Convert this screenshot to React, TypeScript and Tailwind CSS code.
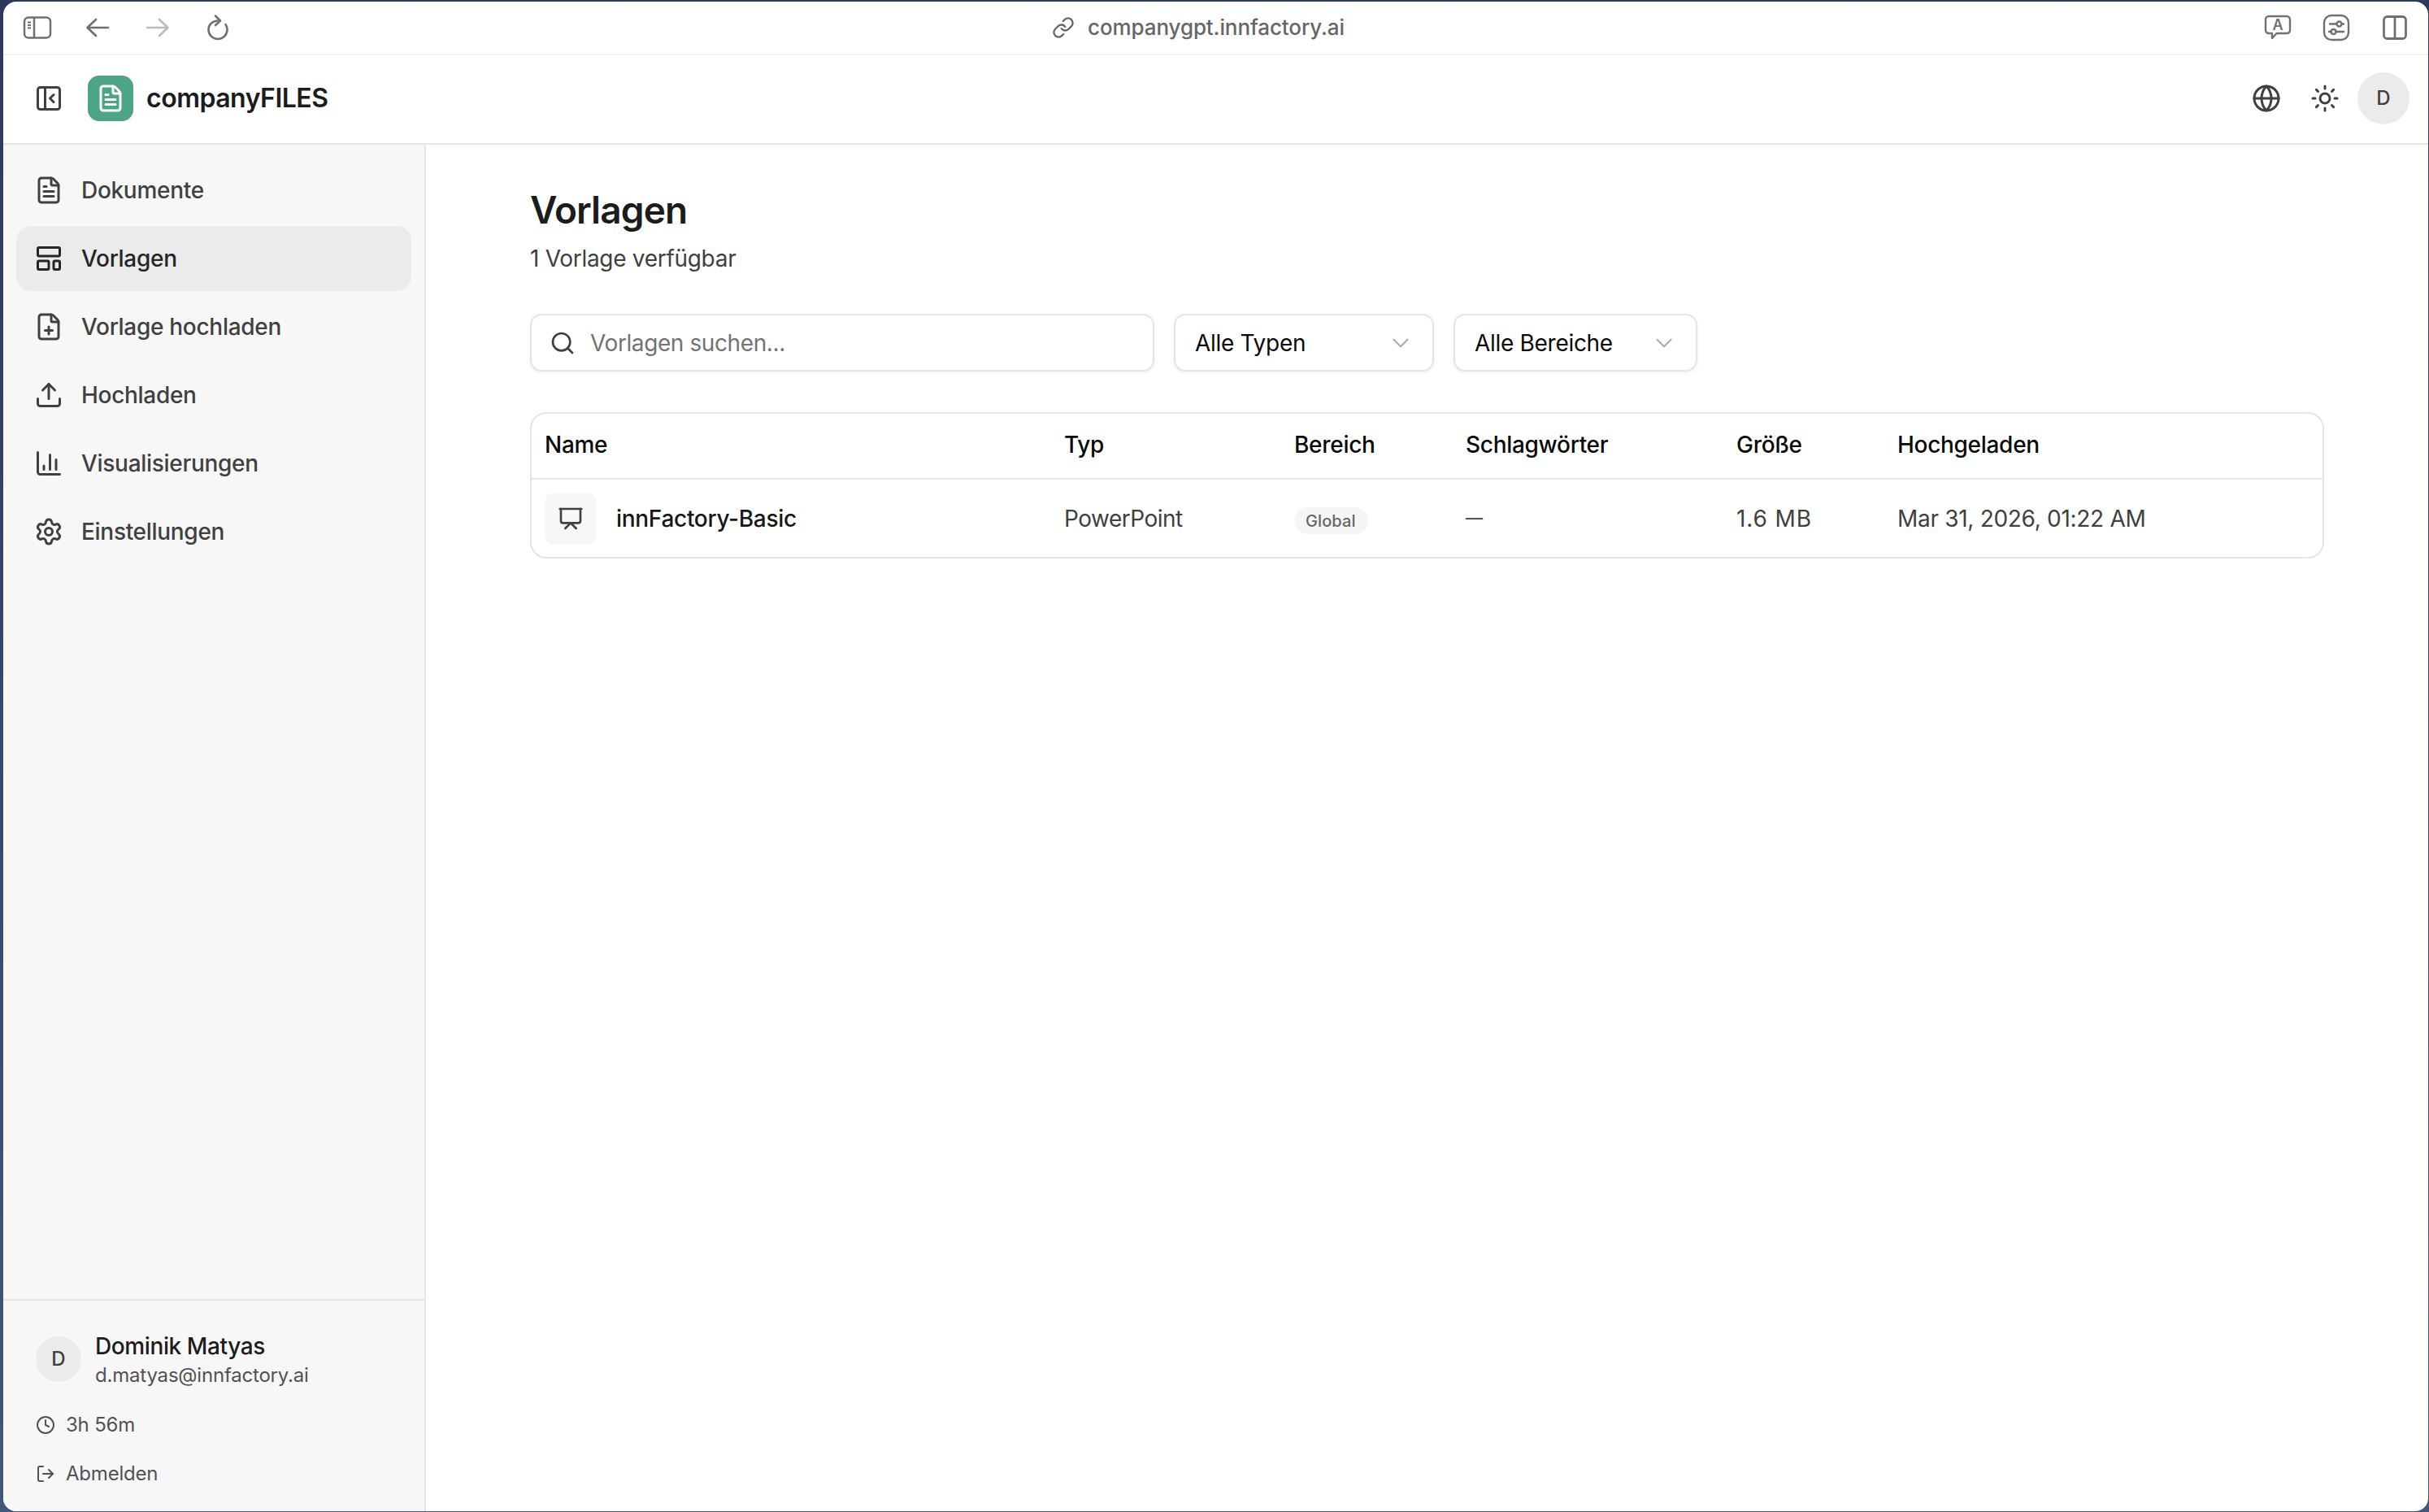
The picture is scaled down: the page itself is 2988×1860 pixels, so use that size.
import { FileText, LayoutTemplate, FilePlus, Upload, ChartColumn, Settings, PanelLeftClose, Globe, Sun, Clock, LogOut, Search, Presentation, ChevronDown, Link } from "lucide-react";

const font = { fontFamily: "Inter, 'Noto Sans', sans-serif" };

function SafariSidebar() {
  return (
    <svg width="36" height="36" viewBox="0 0 36 36" fill="none" stroke="#707070" strokeWidth="2.5">
      <rect x="2" y="5.5" width="32" height="25" rx="5" />
      <path d="M14 5.5V30.5" />
      <path d="M6 11.5H10M6 15H10M6 18.5H10" strokeWidth="2" />
    </svg>
  );
}
function Arrow({ right, color }: { right?: boolean; color: string }) {
  return (
    <svg width="36" height="36" viewBox="0 0 36 36" fill="none" stroke={color} strokeWidth="2.6" strokeLinecap="round" strokeLinejoin="round">
      {right ? <path d="M5 18H30M20 8L30.5 18L20 28" /> : <path d="M31 18H6M16 8L5.5 18L16 28" />}
    </svg>
  );
}
function Reload() {
  return (
    <svg width="36" height="36" viewBox="0 0 36 36" fill="none" stroke="#707070" strokeWidth="2.6" strokeLinecap="round" strokeLinejoin="round">
      <path d="M17.5 9.5C11 10 6.5 14.5 6.5 20.5C6.5 27 11.6 32 18 32C24.4 32 29.5 27 29.5 20.5C29.5 18 28.6 15.8 27.5 14" />
      <path d="M15 3.5L21 9.5L15 15" />
    </svg>
  );
}
function Bubble() {
  return (
    <svg width="36" height="36" viewBox="0 0 36 36" fill="none" stroke="#707070" strokeWidth="2.4" strokeLinejoin="round">
      <path d="M7 4H29A4 4 0 0 1 33 8V21A4 4 0 0 1 29 25H16.5L11 31V25H7A4 4 0 0 1 3 21V8A4 4 0 0 1 7 4Z" />
      <text x="18" y="21" textAnchor="middle" fontSize="18" fontWeight="600" fill="#707070" stroke="none" fontFamily="Inter, sans-serif">A</text>
    </svg>
  );
}
function Sliders() {
  return (
    <svg width="36" height="36" viewBox="0 0 36 36" fill="none" stroke="#707070" strokeWidth="2.4">
      <rect x="3" y="3" width="30" height="30" rx="9" />
      <path d="M10 13.5H18M25 13.5H27M9 23H11M18 23H27" strokeLinecap="round" />
      <circle cx="21.5" cy="13.5" r="3" />
      <circle cx="14.5" cy="23" r="3" />
    </svg>
  );
}
function Split() {
  return (
    <svg width="36" height="36" viewBox="0 0 36 36" fill="none" stroke="#707070" strokeWidth="2.8">
      <rect x="4.5" y="4.5" width="27" height="27" rx="4" />
      <path d="M18 4.5V31.5" />
    </svg>
  );
}

const nav = [
  { label: "Dokumente", Icon: FileText },
  { label: "Vorlagen", Icon: LayoutTemplate, active: true },
  { label: "Vorlage hochladen", Icon: FilePlus },
  { label: "Hochladen", Icon: Upload },
  { label: "Visualisierungen", Icon: ChartColumn },
  { label: "Einstellungen", Icon: Settings },
];

function SelectBox({ label, width }: { label: string; width: string }) {
  return (
    <div className={`${width} h-[71px] shrink-0 flex items-center justify-between pl-[24px] pr-[22px] rounded-[14px] border-2 border-[#e5e5e5] bg-white shadow-[0_2px_4px_rgba(0,0,0,0.05)]`}>
      <span className="text-[28px] leading-[40px] tracking-[-0.3px] text-[#0a0a0a]">{label}</span>
      <ChevronDown size={34} strokeWidth={1.7} className="text-[#b0b0b0]" />
    </div>
  );
}

export default function App() {
  return (
    <div className="w-[2988px] h-[1860px] overflow-hidden bg-linear-to-b from-[#2c3a5a] to-[#44567a] pt-[2px] pl-[4px] pb-[1px] pr-[1px]" style={font}>
      <div className="w-full h-full bg-white rounded-[16px] overflow-hidden flex flex-col">
        {/* browser toolbar */}
        <div className="h-[66px] shrink-0 flex items-center border-b-2 border-[#f3f3f3] pl-[5px] pr-[5px]">
          <div className="flex">
            <div className="w-[74px] flex justify-center"><SafariSidebar /></div>
            <div className="w-[74px] flex justify-center"><Arrow color="#707070" /></div>
            <div className="w-[74px] flex justify-center"><Arrow right color="#bcbcbc" /></div>
            <div className="w-[74px] flex justify-center"><Reload /></div>
          </div>
          <div className="ml-[989px] flex items-center gap-[16px]">
            <Link size={28} strokeWidth={2} className="text-[#666666]" />
            <span className="text-[26px] font-medium tracking-[-0.1px] text-[#666666] leading-[36px]">companygpt.innfactory.ai</span>
          </div>
          <div className="ml-auto flex">
            <div className="w-[72px] flex justify-center"><Bubble /></div>
            <div className="w-[72px] flex justify-center"><Sliders /></div>
            <div className="w-[72px] flex justify-center"><Split /></div>
          </div>
        </div>

        {/* app header */}
        <div className="h-[110px] shrink-0 flex items-center border-b-2 border-[#e5e5e5] pl-[38px] pr-[23px] pb-[2px]">
          <PanelLeftClose size={36} strokeWidth={2} className="text-[#404040]" />
          <div className="ml-[30px] w-[56px] h-[56px] rounded-[14px] bg-[#4ca585] flex items-center justify-center">
            <FileText size={36} strokeWidth={2} className="text-white" />
          </div>
          <span className="ml-[16px] text-[32px] leading-[48px] font-semibold tracking-[-0.5px] text-[#1c1c1c]">companyFILES</span>
          <div className="ml-auto flex items-center">
            <div className="w-[72px] h-[72px] flex items-center justify-center"><Globe size={36} strokeWidth={2} className="text-[#404040]" /></div>
            <div className="w-[72px] h-[72px] flex items-center justify-center"><Sun size={36} strokeWidth={2} className="text-[#404040]" /></div>
            <div className="ml-[4px] w-[64px] h-[64px] rounded-full bg-[#ebebeb] flex items-center justify-center text-[24px] font-medium text-[#404040]">D</div>
          </div>
        </div>

        {/* body */}
        <div className="flex-1 flex min-h-0">
          <aside className="w-[520px] shrink-0 bg-[#f7f7f7] border-r-2 border-[#e5e5e5] flex flex-col">
            <nav className="p-[16px] flex flex-col gap-[4px]">
              {nav.map(({ label, Icon, active }) => (
                <div key={label} className={`h-[80px] flex items-center gap-[22px] pl-[22px] rounded-[18px] text-[28px] tracking-[-0.3px] font-medium ${active ? "bg-[#ebebeb] text-[#262626]" : "text-[#404040]"}`}>
                  <Icon size={36} strokeWidth={2} />
                  <span>{label}</span>
                </div>
              ))}
            </nav>
            <div className="mt-auto border-t-2 border-[#e5e5e5] pt-[36px] pb-[30px] pl-[40px]">
              <div className="flex items-center gap-[17px]">
                <div className="w-[56px] h-[56px] rounded-full bg-[#ebebeb] flex items-center justify-center text-[24px] font-medium text-[#404040]">D</div>
                <div>
                  <div className="text-[28px] leading-[40px] tracking-[-0.4px] font-medium text-[#1c1c1c]">Dominik Matyas</div>
                  <div className="text-[24px] leading-[32px] tracking-[-0.2px] text-[#525252]">d.matyas@innfactory.ai</div>
                </div>
              </div>
              <div className="mt-[29px] h-[32px] flex items-center gap-[13px] text-[24px] tracking-[-0.2px] text-[#525252]">
                <Clock size={24} strokeWidth={2} />
                <span>3h 56m</span>
              </div>
              <div className="mt-[28px] h-[32px] flex items-center gap-[13px] text-[24px] tracking-[-0.2px] text-[#525252]">
                <LogOut size={24} strokeWidth={2} />
                <span>Abmelden</span>
              </div>
            </div>
          </aside>

          <main className="flex-1 min-w-0 px-[128px] pt-[48px]">
            <h1 className="text-[46px] leading-[64px] font-semibold tracking-[-0.9px] text-[#1c1c1c]">Vorlagen</h1>
            <p className="mt-[8px] text-[28px] leading-[40px] tracking-[-0.3px] text-[#404040]">1 Vorlage verfügbar</p>
            <div className="mt-[48px] flex gap-[24px]">
              <div className="w-[768px] h-[71px] shrink-0 flex items-center gap-[18px] pl-[22px] rounded-[14px] border-2 border-[#e5e5e5] bg-white shadow-[0_2px_4px_rgba(0,0,0,0.05)]">
                <Search size={32} strokeWidth={2} className="text-[#404040]" />
                <span className="text-[28px] leading-[40px] tracking-[-0.4px] text-[#737373]">Vorlagen suchen...</span>
              </div>
              <SelectBox label="Alle Typen" width="w-[320px]" />
              <SelectBox label="Alle Bereiche" width="w-[300px]" />
            </div>
            <div className="mt-[50px] rounded-[20px] border-2 border-[#e5e5e5] overflow-hidden">
              <table className="w-full table-fixed border-collapse text-[28px] tracking-[-0.3px]">
                <colgroup>
                  <col className="w-[639px]" />
                  <col className="w-[283px]" />
                  <col className="w-[211px]" />
                  <col className="w-[333px]" />
                  <col className="w-[198px]" />
                  <col />
                </colgroup>
                <thead>
                  <tr className="h-[80px] border-b-2 border-[#e5e5e5]">
                    {["Name", "Typ", "Bereich", "Schlagwörter", "Größe", "Hochgeladen"].map((h) => (
                      <th key={h} className="pl-[16px] pb-[3px] text-left font-medium text-[#0a0a0a]">{h}</th>
                    ))}
                  </tr>
                </thead>
                <tbody className="text-[#404040]">
                  <tr className="h-[96px]">
                    <td className="pl-[16px]">
                      <div className="flex items-center gap-[24px]">
                        <div className="w-[64px] h-[64px] rounded-[12px] bg-[#f7f7f7] flex items-center justify-center">
                          <Presentation size={32} strokeWidth={2} className="text-[#404040]" />
                        </div>
                        <span className="font-medium text-[#171717]">innFactory-Basic</span>
                      </div>
                    </td>
                    <td className="pl-[16px] tracking-[-0.5px]">PowerPoint</td>
                    <td className="pl-[16px]">
                      <span className="inline-flex items-center h-[33px] pl-[14px] pr-[15px] rounded-full bg-[#f5f5f5] text-[20px] tracking-[0.1px] font-medium text-[#666666]">Global</span>
                    </td>
                    <td className="pl-[16px] text-[21px]">—</td>
                    <td className="pl-[16px] tracking-[0.9px]">1.6 MB</td>
                    <td className="pl-[16px]">Mar 31, 2026, 01:22 AM</td>
                  </tr>
                </tbody>
              </table>
            </div>
          </main>
        </div>
      </div>
    </div>
  );
}
